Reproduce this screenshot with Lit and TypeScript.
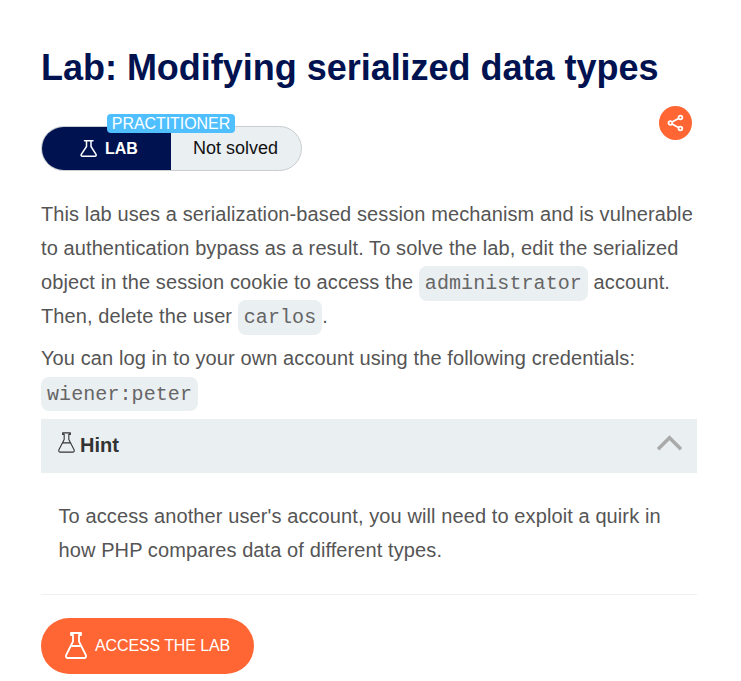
import { LitElement, html, css, svg } from "lit";
import { customElement } from "lit/decorators.js";

const flask = (cls: string, w: number) => html`
  <svg class=${cls} viewBox="0 0 22 27" fill="none" stroke="currentColor" stroke-width=${w} stroke-linejoin="round" stroke-linecap="round">
    ${svg`<path d="M6 1H16V3H14V9.500L20.800 23Q21.700 26 19 26H3Q.3 26 1.200 23L8 9.500V3H6ZM5.800 14H16.200" />`}
  </svg>`;

@customElement("app-root")
export class AppRoot extends LitElement {
  static styles = css`
    :host {
      display: block;
      box-sizing: border-box;
      width: 741px;
      height: 681px;
      padding: 46px 44px 0 41px;
      overflow: hidden;
      background: #fff;
      color: #555;
      font: 20px/34px "Liberation Sans", Arial, sans-serif;
    }
    svg { display: block; flex: none; }
    h1 {
      margin: 0;
      height: 44px;
      font-size: 36px;
      line-height: 44px;
      letter-spacing: -0.02px;
      color: #00124f;
      white-space: nowrap;
    }
    .meta {
      display: flex;
      justify-content: space-between;
      align-items: flex-start;
      margin-top: 16px;
      padding-right: 5px;
      height: 91px;
    }
    .status {
      position: relative;
      display: flex;
      box-sizing: border-box;
      width: 261px;
      height: 45px;
      margin-top: 20px;
      border: 1px solid #c9cdd0;
      border-radius: 23px;
      background: #eaeff2;
      font-size: 18px;
      line-height: 43px;
      color: #111;
    }
    .kind {
      display: flex;
      align-items: center;
      box-sizing: border-box;
      width: 129px;
      padding-left: 37.500px;
      border-radius: 22px 0 0 22px;
      background: #00124f;
      color: #fff;
      font-size: 16px;
      font-weight: bold;
    }
    .kind span { margin-left: 8.500px; }
    .state { padding-left: 22px; white-space: nowrap; }
    .level {
      position: absolute;
      left: 65px;
      top: -13px;
      width: 128px;
      height: 19px;
      border-radius: 4px;
      background: #4fbfff;
      color: #fff;
      font-size: 16px;
      line-height: 20px;
      letter-spacing: -0.06px;
      text-align: center;
    }
    .share {
      display: grid;
      place-items: center;
      width: 33px;
      height: 34px;
      border-radius: 50%;
      background: #ff6633;
    }
    .share svg { width: 17px; height: 18px; }
    p { margin: 0; letter-spacing: 0.1px; white-space: nowrap; }
    .second { margin-top: 8px; }
    code {
      padding: 6px;
      border-radius: 8px;
      background: #eaeff2;
      color: #666;
      font: 20px/20px "Liberation Mono", "Courier New", monospace;
      letter-spacing: 0.08px;
    }
    .second code { display: inline-block; padding: 7px 6px 5px; line-height: 22px; vertical-align: -1px; margin-top: -1px; }
    .hint {
      display: flex;
      align-items: center;
      height: 54px;
      margin-top: 8px;
      padding: 0 15px 0 17px;
      background: #eaeff2;
      color: #333;
    }
    .hint b { flex: 1; margin: -3px 0 0 5px; }
    .flask-s { width: 17px; height: 17px; }
    .flask-m { width: 17px; height: 21px; margin-top: -8px; }
    .flask-l { width: 22px; height: 27px; }
    .chev { width: 25px; height: 16px; margin-top: -7px; }
    .answer { padding: 26px 17.500px 27px; border-bottom: 1px solid #f0f0f0; }
    .access {
      display: flex;
      align-items: center;
      box-sizing: border-box;
      width: 213px;
      height: 56px;
      margin: 23px 0 0;
      padding: 0 0 0 23.500px;
      border: 0;
      border-radius: 28px;
      background: #ff6633;
      color: #fff;
      font: 16px/20px "Liberation Sans", Arial, sans-serif;
      letter-spacing: -0.11px;
      white-space: nowrap;
    }
    .access svg { margin-top: -1px; }
    .access span { margin: -1px 0 0 8.500px; }
  `;

  render() {
    return html`
      <h1>Lab: Modifying serialized data types</h1>
      <div class="meta">
        <div class="status">
          <div class="kind">
            <svg class="flask-s" viewBox="0 0 17 17" fill="none" stroke="currentColor" stroke-width="1.5" stroke-linejoin="round" stroke-linecap="round">
              <path d="M4.500 .8H13M6.500 1V6.500L1.300 14.300Q.7 16.200 2.300 16.200H15Q16.600 16.200 16 14.300L11 6.500V1" />
            </svg>
            <span>LAB</span>
          </div>
          <div class="state">Not solved</div>
          <div class="level">PRACTITIONER</div>
        </div>
        <div class="share">
          <svg viewBox="0 0 17 18" fill="none" stroke="#fff" stroke-width="1.8">
            <path d="M5 8L11.500 4.500M5 10L11.500 13.500" />
            <circle cx="3.400" cy="9" r="1.900" /><circle cx="13.400" cy="3.500" r="1.900" /><circle cx="13.400" cy="14.500" r="1.900" />
          </svg>
        </div>
      </div>
      <p>
        This lab uses a serialization-based session mechanism and is vulnerable<br />
        to authentication bypass as a result. To solve the lab, edit the serialized<br />
        object in the session cookie to access the <code>administrator</code> account.<br />
        Then, delete the user <code>carlos</code>.
      </p>
      <p class="second">
        You can log in to your own account using the following credentials:<br />
        <code>wiener:peter</code>
      </p>
      <div class="hint">
        ${flask("flask-m", 1.4)}
        <b>Hint</b>
        <svg class="chev" viewBox="0 0 25 16" fill="none" stroke="#aaa" stroke-width="3.500"><path d="M1 14.300L12.500 2.800L24 14.300" /></svg>
      </div>
      <div class="answer">
        <p>To access another user's account, you will need to exploit a quirk in<br />how PHP compares data of different types.</p>
      </div>
      <button class="access">${flask("flask-l", 1.8)}<span>ACCESS THE LAB</span></button>
    `;
  }
}
